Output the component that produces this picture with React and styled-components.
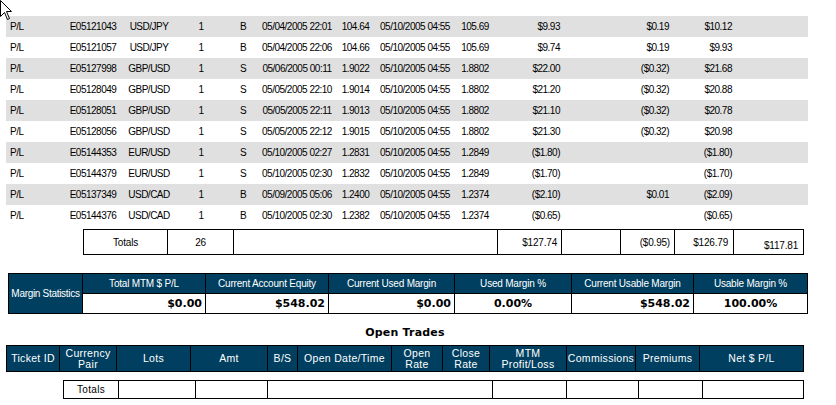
import React from 'react';
import styled, { createGlobalStyle } from 'styled-components';

const NAVY = '#003f60';

const GlobalStyle = createGlobalStyle`
  html, body { margin: 0; padding: 0; background: #fff; }
  body { font-family: "Liberation Sans", Arial, sans-serif; color: #000; }
`;

const Page = styled.div`
  position: relative;
  width: 836px;
  height: 405px;
  padding: 16px 0 0 6px;
  box-sizing: border-box;
  overflow: hidden;
`;

const Cursor = styled.svg`
  position: absolute;
  left: 0;
  top: 0;
`;

const Table = styled.table`
  border-collapse: collapse;
  table-layout: fixed;
  margin-left: ${p => p.$left || 0}px;
  margin-top: ${p => p.$top || 0}px;
  font-size: 10px;
  letter-spacing: -0.5px;
`;

const DataRow = styled.tr`
  height: 21px;
  background: ${p => (p.$shade ? '#e0e0e0' : '#fff')};
`;

const Cell = styled.td`
  padding: 0 ${p => p.$pr || 0}px 0 ${p => p.$pl || 0}px;
  text-align: ${p => p.$align || 'center'};
  vertical-align: ${p => p.$valign || 'middle'};
  white-space: nowrap;
  overflow: hidden;
`;

const BoxCell = styled(Cell)`
  border: 1px solid #000;
  height: ${p => p.$h || 21}px;
  padding-bottom: ${p => p.$pb || 0}px;
  letter-spacing: -0.2px;
`;

const HeadCell = styled.td`
  background: ${NAVY};
  color: #fff;
  border: 1px solid #000;
  text-align: center;
  vertical-align: middle;
  height: ${p => p.$h || 19}px;
  padding: 0;
  font-size: ${p => p.$fs || 10}px;
  line-height: ${p => p.$lh || 'normal'};
  letter-spacing: ${p => p.$ls || '-0.2px'};
  white-space: nowrap;
`;

const ValueCell = styled.td`
  border: 1px solid #000;
  height: 19px;
  padding: 0 ${p => p.$pr || 0}px 0 0;
  text-align: ${p => p.$align || 'right'};
  font-family: "DejaVu Sans", Verdana, sans-serif;
  font-weight: bold;
  font-size: 11px;
  letter-spacing: 0;
`;

const Title = styled.div`
  width: 798px;
  height: 31px;
  box-sizing: border-box;
  padding-top: 12px;
  text-align: center;
  font-family: "DejaVu Sans", Verdana, sans-serif;
  font-weight: bold;
  font-size: 11px;
  letter-spacing: 0.2px;
`;

const mainCols = [54, 66, 46, 58, 26, 82, 35, 84, 36, 69, 58, 51, 62, 75];

const trades = [
  ['E05121043', 'USD/JPY', 'B', '05/04/2005 22:01', '104.64', '105.69', '$9.93', '$0.19', '$10.12'],
  ['E05121057', 'USD/JPY', 'B', '05/04/2005 22:06', '104.66', '105.69', '$9.74', '$0.19', '$9.93'],
  ['E05127998', 'GBP/USD', 'S', '05/06/2005 00:11', '1.9022', '1.8802', '$22.00', '($0.32)', '$21.68'],
  ['E05128049', 'GBP/USD', 'S', '05/05/2005 22:10', '1.9014', '1.8802', '$21.20', '($0.32)', '$20.88'],
  ['E05128051', 'GBP/USD', 'S', '05/05/2005 22:11', '1.9013', '1.8802', '$21.10', '($0.32)', '$20.78'],
  ['E05128056', 'GBP/USD', 'S', '05/05/2005 22:12', '1.9015', '1.8802', '$21.30', '($0.32)', '$20.98'],
  ['E05144353', 'EUR/USD', 'S', '05/10/2005 02:27', '1.2831', '1.2849', '($1.80)', '', '($1.80)'],
  ['E05144379', 'EUR/USD', 'S', '05/10/2005 02:30', '1.2832', '1.2849', '($1.70)', '', '($1.70)'],
  ['E05137349', 'USD/CAD', 'B', '05/09/2005 05:06', '1.2400', '1.2374', '($2.10)', '$0.01', '($2.09)'],
  ['E05144376', 'USD/CAD', 'B', '05/10/2005 02:30', '1.2382', '1.2374', '($0.65)', '', '($0.65)'],
];

const totalsCols = [84, 66, 264, 64, 59, 54, 59, 70];

const marginCols = [74, 123, 123, 126, 117, 122, 114];
const marginStats = [
  ['Total MTM $ P/L', '$0.00', 'right'],
  ['Current Account Equity', '$548.02', 'right'],
  ['Current Used Margin', '$0.00', 'right'],
  ['Used Margin %', '0.00%', 'center'],
  ['Current Usable Margin', '$548.02', 'right'],
  ['Usable Margin %', '100.00%', 'center'],
];

const openCols = [53, 57, 74, 77, 30, 94, 51, 47, 77, 69, 64, 104];
const openHeads = [
  'Ticket ID', ['Currency', 'Pair'], 'Lots', 'Amt', 'B/S', 'Open Date/Time',
  ['Open', 'Rate'], ['Close', 'Rate'], ['MTM', 'Profit/Loss'], 'Commissions', 'Premiums', 'Net $ P/L',
];
const openTotalCols = [55, 77, 72, 225, 74, 72, 64, 101];

const Cols = ({ widths }) => (
  <colgroup>
    {widths.map((w, i) => <col key={i} style={{ width: w }} />)}
  </colgroup>
);

const width = ws => ws.reduce((a, b) => a + b, 0);

export default function App() {
  return (
    <>
      <GlobalStyle />
      <Page>
        <Cursor width="14" height="22" viewBox="0 0 14 22">
          <path d="M0.5 0.5 L0.5 16.5 L4.5 12.5 L7.5 19.5 L9.5 18.5 L6.5 11.5 L11.5 11.5 Z" fill="#fff" stroke="#000" strokeWidth="1" />
        </Cursor>

        <Table style={{ width: width(mainCols) }}>
          <Cols widths={mainCols} />
          <tbody>
            {trades.map((t, i) => (
              <DataRow key={t[0]} $shade={i % 2 === 0}>
                <Cell $align="left" $pl={4}>P/L</Cell>
                <Cell>{t[0]}</Cell>
                <Cell>{t[1]}</Cell>
                <Cell>1</Cell>
                <Cell>{t[2]}</Cell>
                <Cell>{t[3]}</Cell>
                <Cell>{t[4]}</Cell>
                <Cell>05/10/2005 04:55</Cell>
                <Cell>{t[5]}</Cell>
                <Cell $align="right" $pr={2}>{t[6]}</Cell>
                <Cell />
                <Cell $align="right" $pr={2}>{t[7]}</Cell>
                <Cell $align="right" $pr={1}>{t[8]}</Cell>
                <Cell />
              </DataRow>
            ))}
          </tbody>
        </Table>

        <Table $left={77} $top={3} style={{ width: width(totalsCols) }}>
          <Cols widths={totalsCols} />
          <tbody>
            <tr>
              <BoxCell>Totals</BoxCell>
              <BoxCell>26</BoxCell>
              <BoxCell />
              <BoxCell $align="right" $pr={4}>$127.74</BoxCell>
              <BoxCell />
              <BoxCell $align="right" $pr={4}>($0.95)</BoxCell>
              <BoxCell $align="right" $pr={5}>$126.79</BoxCell>
              <BoxCell $align="right" $pr={5} $valign="bottom" $pb={3}>$117.81</BoxCell>
            </tr>
          </tbody>
        </Table>

        <Table $left={2} $top={18} style={{ width: width(marginCols) }}>
          <Cols widths={marginCols} />
          <tbody>
            <tr>
              <HeadCell rowSpan={2} $ls="-0.3px">Margin Statistics</HeadCell>
              {marginStats.map(m => <HeadCell key={m[0]}>{m[0]}</HeadCell>)}
            </tr>
            <tr>
              {marginStats.map(m => (
                <ValueCell key={m[0]} $align={m[2]} $pr={m[2] === 'right' ? 3 : 0}>{m[1]}</ValueCell>
              ))}
            </tr>
          </tbody>
        </Table>

        <Title>Open Trades</Title>

        <Table style={{ width: width(openCols) }}>
          <Cols widths={openCols} />
          <tbody>
            <tr>
              {openHeads.map((h, i) => (
                <HeadCell key={i} $h={25} $fs={10.5} $lh="11px" $ls="0.3px">
                  {Array.isArray(h) ? <>{h[0]}<br />{h[1]}</> : h}
                </HeadCell>
              ))}
            </tr>
          </tbody>
        </Table>

        <Table $left={57} $top={8} style={{ width: width(openTotalCols) }}>
          <Cols widths={openTotalCols} />
          <tbody>
            <tr>
              <BoxCell $h={17} style={{ letterSpacing: '0.3px' }}>Totals</BoxCell>
              {openTotalCols.slice(1).map((_, i) => <BoxCell key={i} $h={17} />)}
            </tr>
          </tbody>
        </Table>
      </Page>
    </>
  );
}
